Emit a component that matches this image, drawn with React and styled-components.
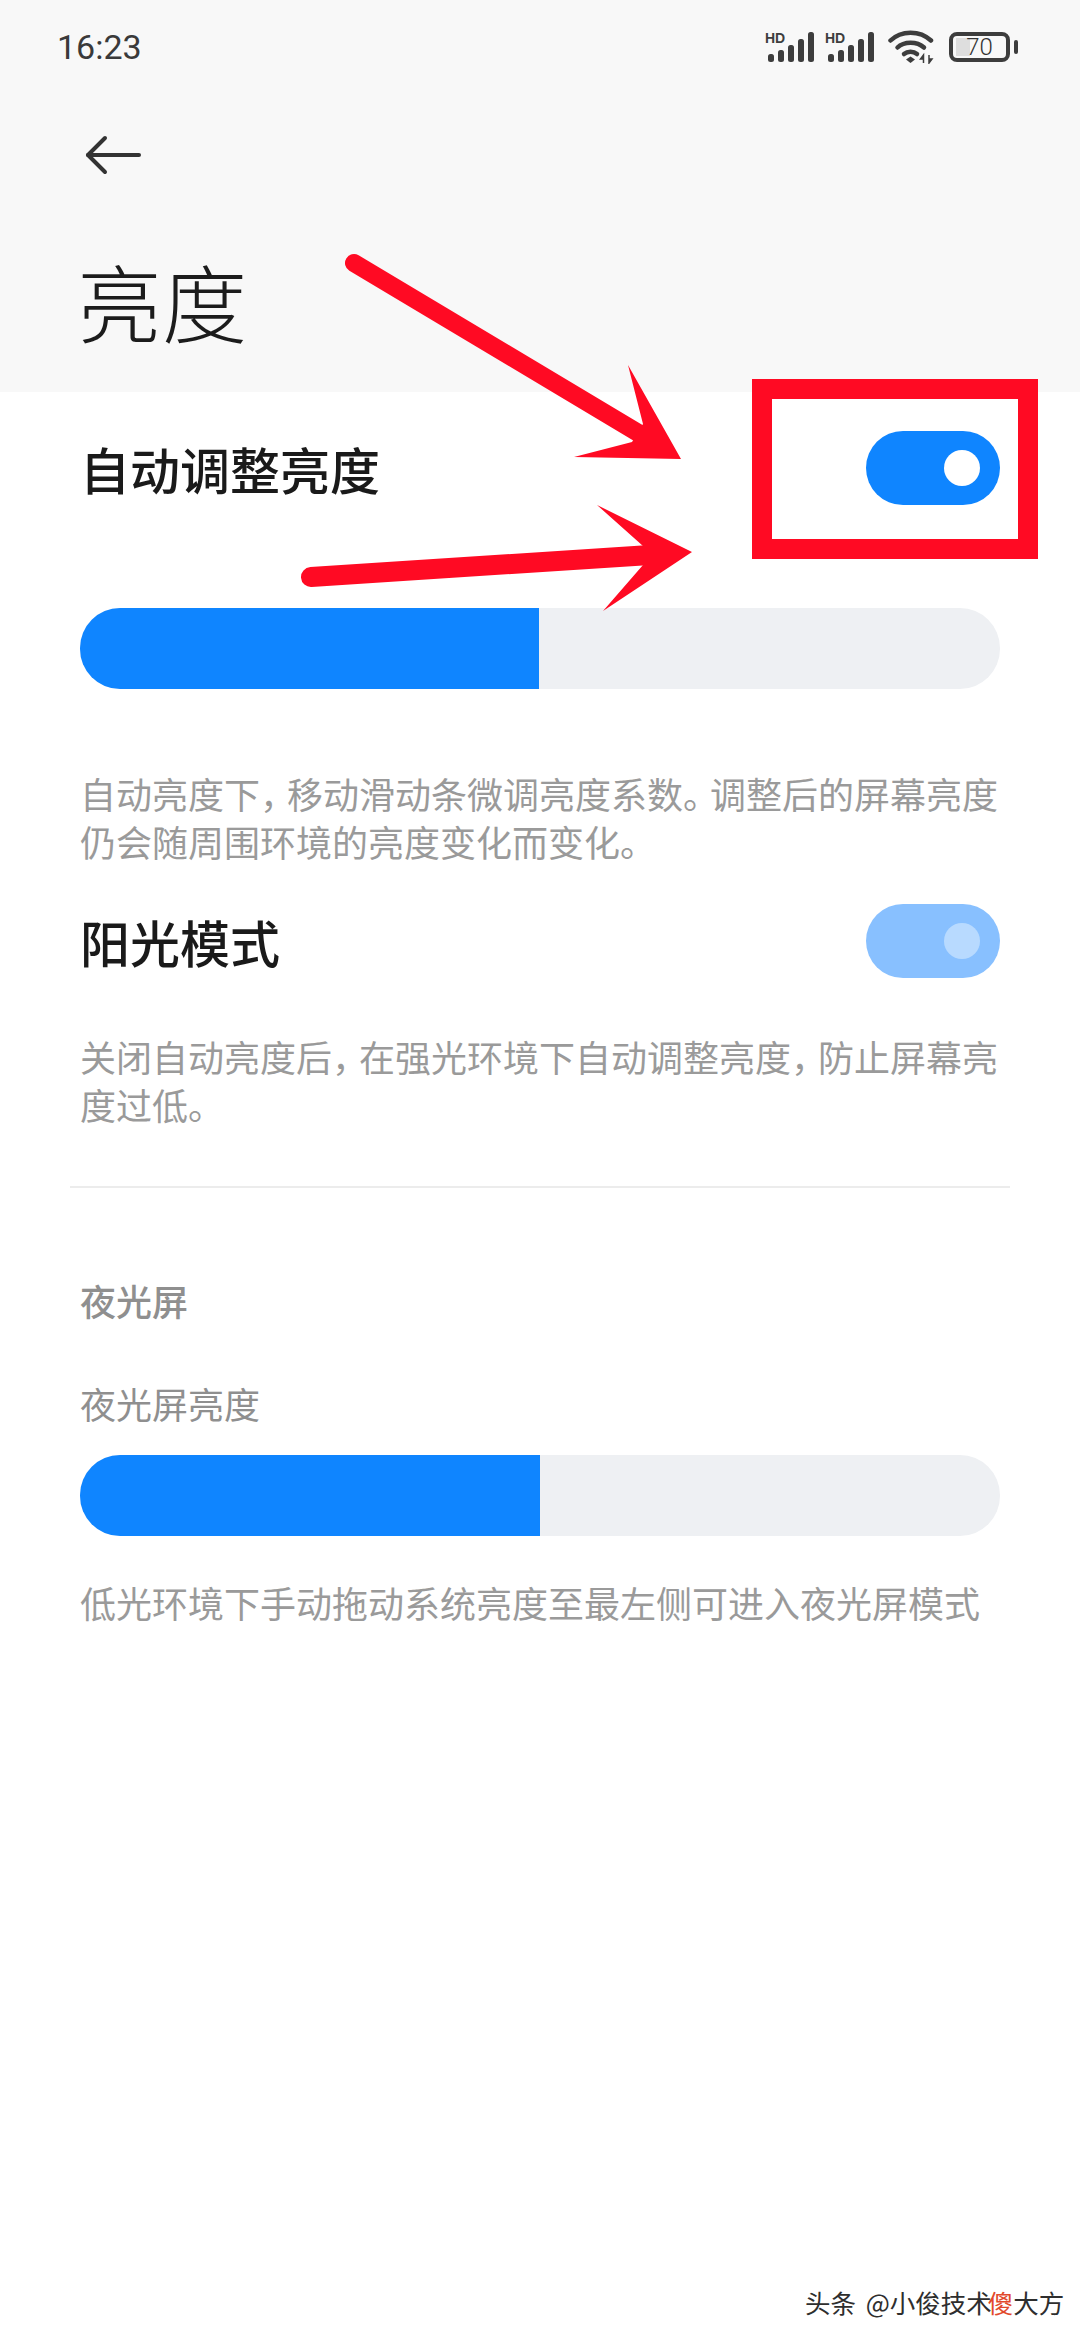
import React from 'react';
import styled, { createGlobalStyle } from 'styled-components';

const cjk = '"Noto Sans CJK SC", "Noto Sans", sans-serif';
const blue = '#0f85ff';
const red = '#ff0a23';

const GlobalStyle = createGlobalStyle`
  html, body {
    margin: 0;
    padding: 0;
    background: #ffffff;
  }
  * { box-sizing: border-box; }
`;

const Page = styled.div`
  position: relative;
  width: 1080px;
  height: 2340px;
  overflow: hidden;
  background: #ffffff;
  font-family: ${cjk};
`;

const Header = styled.header`
  height: 392px;
  background: #f8f8f8;
`;

const StatusBar = styled.div`
  height: 94px;
  padding: 0 63px 0 57px;
  display: flex;
  align-items: center;
  justify-content: space-between;
`;

const Clock = styled.span`
  font-family: Roboto, sans-serif;
  font-size: 34px;
  line-height: 40px;
  color: #3a3a3a;
`;

const StatusIcons = styled.div`
  display: flex;
  align-items: center;
`;

const Battery = styled.div`
  position: relative;
  width: 61px;
  height: 30px;
  margin-left: 15px;
  margin-right: 7px;
  border: 4px solid #3d3d3d;
  border-radius: 8px;
  background: linear-gradient(#dedede, #dedede) no-repeat 3px 2px / 14px 18px;
  display: flex;
  align-items: center;
  justify-content: center;
  font-family: Roboto, sans-serif;
  font-weight: 300;
  font-size: 24px;
  color: #333333;

  &::after {
    content: '';
    position: absolute;
    right: -12px;
    top: 4px;
    width: 4px;
    height: 14px;
    border-radius: 2px;
    background: #3d3d3d;
  }
`;

const BackButton = styled.div`
  height: 70px;
  padding-left: 84px;
  margin-top: 26px;
  display: flex;
  align-items: center;
`;

const PageTitle = styled.h1`
  margin: 60px 0 0 77px;
  font-size: 85px;
  line-height: 100px;
  font-weight: 300;
  color: #1c1c1c;
`;

const Content = styled.main`
  padding: 0 80px;
`;

const SwitchRow = styled.div`
  display: flex;
  align-items: center;
  justify-content: space-between;
  margin-top: ${(p) => p.$top}px;
`;

const RowTitle = styled.span`
  font-size: 50px;
  line-height: 74px;
  font-weight: 500;
  color: #1a1a1a;
`;

const Switch = styled.div`
  width: 134px;
  height: 74px;
  padding-right: 20px;
  border-radius: 37px;
  background: ${(p) => (p.$dim ? '#88c0ff' : blue)};
  display: flex;
  align-items: center;
  justify-content: flex-end;

  &::after {
    content: '';
    width: 36px;
    height: 36px;
    border-radius: 50%;
    background: ${(p) => (p.$dim ? '#b8daff' : '#ffffff')};
  }
`;

const Slider = styled.div`
  height: 81px;
  margin-top: ${(p) => p.$top}px;
  border-radius: 40px;
  background: #eef0f3;
  overflow: hidden;
`;

const SliderFill = styled.div`
  height: 100%;
  background: ${blue};
`;

const Note = styled.p`
  margin: ${(p) => p.$top}px 0 0;
  font-size: 36px;
  line-height: 48px;
  color: #9a9a9a;
  white-space: nowrap;
`;

const Punct = styled.span`
  letter-spacing: -9px;
`;

const Divider = styled.hr`
  height: 2px;
  margin: 58px -10px 0;
  border: 0;
  background: #ececec;
`;

const SectionLabel = styled.div`
  margin-top: ${(p) => p.$top}px;
  font-size: 36px;
  line-height: 48px;
  color: #8f8f8f;
  font-weight: ${(p) => p.$weight || 400};
`;

const RedBox = styled.div`
  position: absolute;
  left: 752px;
  top: 379px;
  width: 286px;
  height: 180px;
  border: solid ${red};
  border-width: 20px;
`;

const Arrows = styled.svg`
  position: absolute;
  left: 0;
  top: 0;
`;

const Watermark = styled.div`
  position: absolute;
  left: 805px;
  top: 2284px;
  display: flex;
  font-size: 25.5px;
  line-height: 36px;
  word-spacing: 4px;
  color: #2e2e2e;
  white-space: pre;
`;

const WatermarkRed = styled.span`
  margin-left: -4px;
  color: #e2492c;
`;

const Signal = () => (
  <svg width="50" height="32" viewBox="0 0 50 32" style={{ display: 'block', marginRight: 10 }}>
    <text x="0" y="12" fontFamily="Liberation Sans" fontWeight="700" fontSize="14" fill="#3d3d3d">HD</text>
    <rect x="3" y="23" width="6" height="8" rx="2.5" fill="#3d3d3d" />
    <rect x="13" y="19" width="6" height="12" rx="2.5" fill="#3d3d3d" />
    <rect x="23" y="14" width="6" height="17" rx="2.5" fill="#3d3d3d" />
    <rect x="33" y="8" width="6" height="23" rx="2.5" fill="#3d3d3d" />
    <rect x="43" y="1" width="6" height="30" rx="2.5" fill="#3d3d3d" />
  </svg>
);

const Wifi = () => (
  <svg width="46" height="34" viewBox="0 0 46 34" style={{ display: 'block', marginLeft: 3 }}>
    <g fill="none" stroke="#3d3d3d" strokeWidth="4.5" strokeLinecap="round">
      <path d="M2.5 10.5C13 0 32 0 43 10.5" />
      <path d="M9.5 17.5C16 11 29 11 36 17.5" />
      <path d="M16 24C19.500 21 25.500 21 29 24" />
    </g>
    <path d="M18 29.500L22.500 26.500L27 29.500L22.500 33Z" fill="#3d3d3d" />
    <path d="M35.500 25V33M35.500 25L32.500 29H35.500ZM41 33V25M41 33L44 29H41Z" fill="#3d3d3d" stroke="#3d3d3d" strokeWidth="1.500" />
  </svg>
);

const BackArrow = () => (
  <svg width="58" height="40" viewBox="0 0 58 40" fill="none" stroke="#333333" strokeWidth="4" strokeLinecap="round" strokeLinejoin="round">
    <path d="M4 20H55" />
    <path d="M21 3L4 20L21 37" />
  </svg>
);

export default function App() {
  return (
    <Page>
      <GlobalStyle />
      <Header>
        <StatusBar>
          <Clock>16:23</Clock>
          <StatusIcons>
            <Signal />
            <Signal />
            <Wifi />
            <Battery>70</Battery>
          </StatusIcons>
        </StatusBar>
        <BackButton>
          <BackArrow />
        </BackButton>
        <PageTitle>亮度</PageTitle>
      </Header>
      <Content>
        <SwitchRow $top={39}>
          <RowTitle>自动调整亮度</RowTitle>
          <Switch />
        </SwitchRow>
        <Slider $top={103}>
          <SliderFill style={{ width: `${(459 / 920) * 100}%` }} />
        </Slider>
        <Note $top={80}>
          自动亮度下<Punct>，</Punct>移动滑动条微调亮度系数<Punct>。</Punct>调整后的屏幕亮度
          <br />
          仍会随周围环境的亮度变化而变化。
        </Note>
        <SwitchRow $top={39}>
          <RowTitle>阳光模式</RowTitle>
          <Switch $dim />
        </SwitchRow>
        <Note $top={54}>
          关闭自动亮度后<Punct>，</Punct>在强光环境下自动调整亮度<Punct>，</Punct>防止屏幕亮
          <br />
          度过低。
        </Note>
        <Divider />
        <SectionLabel $top={88} $weight={500}>夜光屏</SectionLabel>
        <SectionLabel $top={55}>夜光屏亮度</SectionLabel>
        <Slider $top={28}>
          <SliderFill style={{ width: `${(460 / 920) * 100}%` }} />
        </Slider>
        <Note $top={42}>低光环境下手动拖动系统亮度至最左侧可进入夜光屏模式</Note>
      </Content>
      <RedBox />
      <Arrows width="1080" height="2340" viewBox="0 0 1080 2340">
        <path d="M354 263L640 434" stroke={red} strokeWidth="18" strokeLinecap="round" fill="none" />
        <path d="M628 365L681 459L574 457L632 442L643 424Z" fill={red} />
        <path d="M311 577L650 555" stroke={red} strokeWidth="20" strokeLinecap="round" fill="none" />
        <path d="M597 505L692 552L603 611L643 565L643 546Z" fill={red} />
      </Arrows>
      <Watermark>
        {'头条 @小俊技术'}<WatermarkRed>傻</WatermarkRed>大方
      </Watermark>
    </Page>
  );
}
